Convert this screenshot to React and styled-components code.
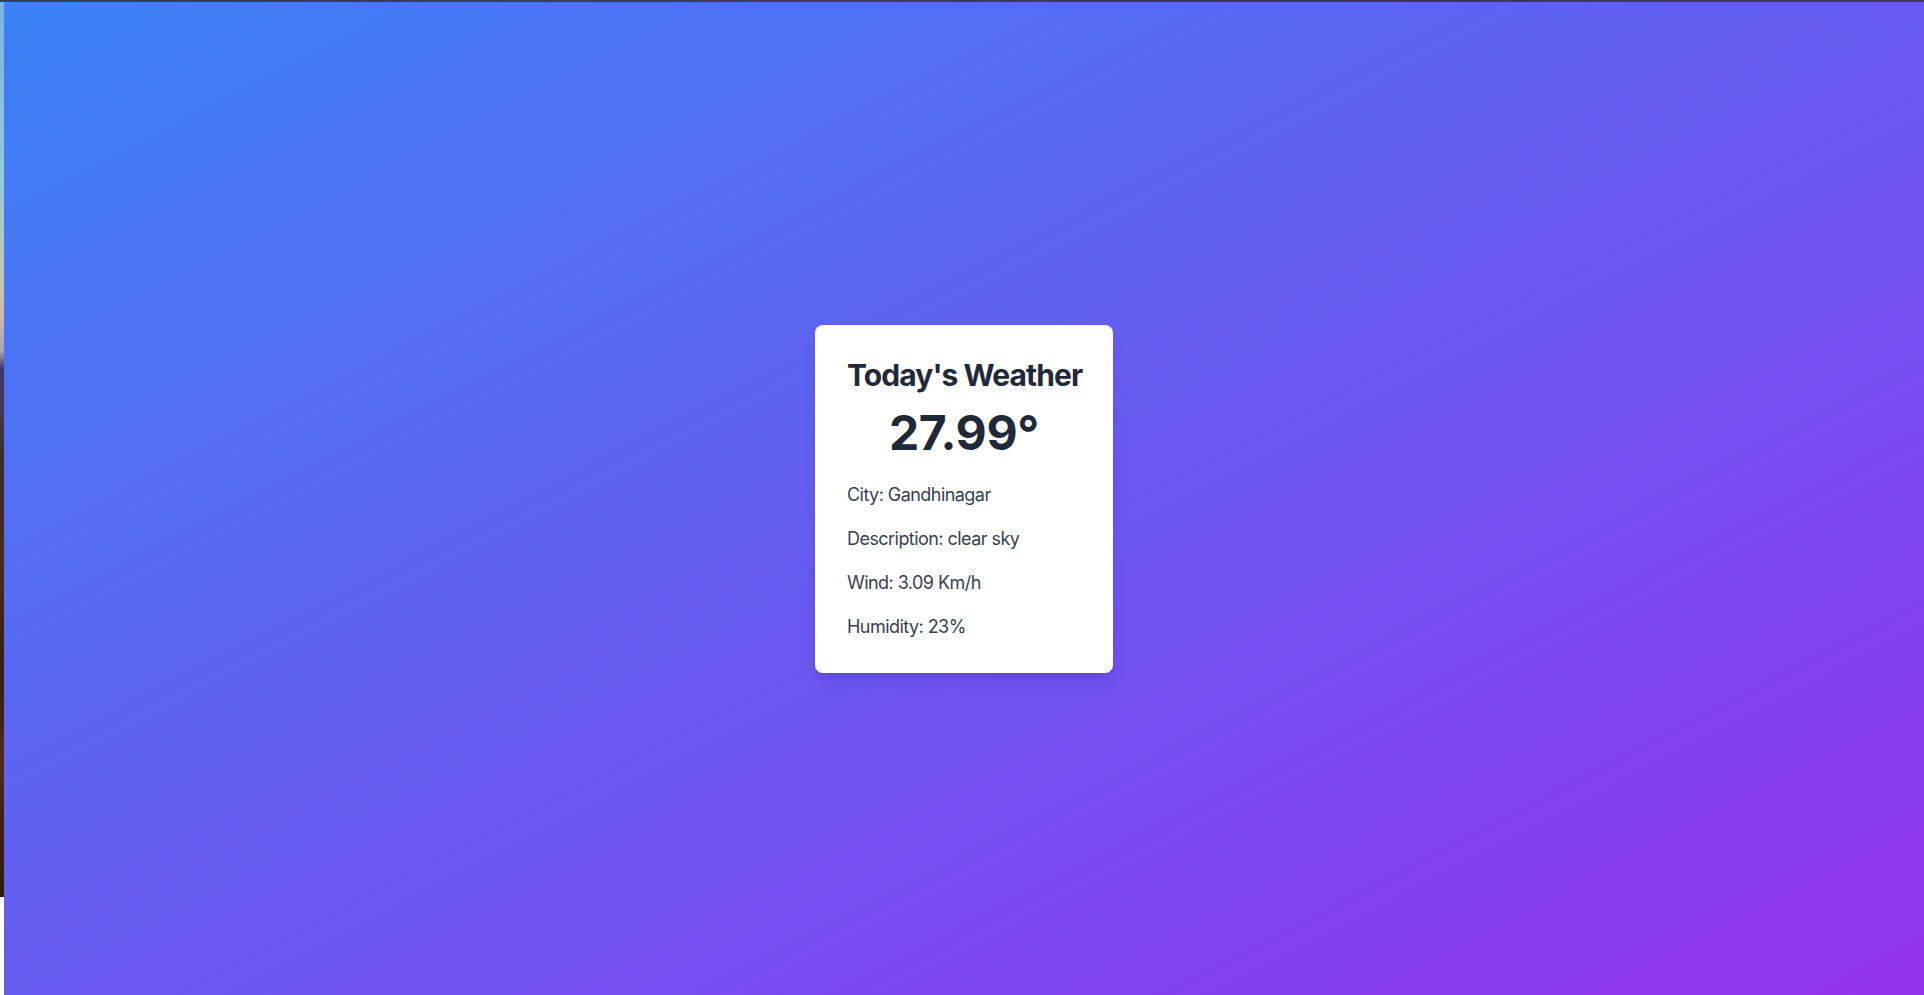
import React from "react";
import styled, { createGlobalStyle } from "styled-components";

const GlobalStyle = createGlobalStyle`
  html, body { margin: 0; padding: 0; height: 100%; }
  body { font-family: Inter, "Noto Sans", sans-serif; background: #ffffff; }
  #root { height: 100%; }
  * { box-sizing: border-box; }
`;

const Screen = styled.div`
  display: flex;
  flex-direction: column;
  width: 100%;
  height: 100vh;
  overflow: hidden;
`;

const TopBar = styled.div`
  height: 2px;
  flex: none;
  background: #3d3d4c;
`;

const Body = styled.div`
  flex: 1;
  display: flex;
  min-height: 0;
`;

const SideStrip = styled.div`
  width: 4px;
  flex: none;
  display: flex;
  flex-direction: column;
  background: #ffffff;
`;

const Wallpaper = styled.div`
  height: 895px;
  background: linear-gradient(
    180deg,
    #78b6e2 0%,
    #93cbd9 20%,
    #c6c4b4 31%,
    #d2b8aa 35%,
    #a9a4b8 39%,
    #3a3868 41%,
    #4a3550 46%,
    #3a2a2e 52%,
    #4b2a1e 62%,
    #3a1d14 75%,
    #50281a 85%,
    #2e1a12 100%
  );
`;

const Main = styled.main`
  flex: 1;
  display: flex;
  align-items: center;
  justify-content: center;
  background: linear-gradient(to bottom right, #3b82f6, #9333ea);
`;

const Card = styled.section`
  background: #ffffff;
  border-radius: 8px;
  padding: 32px;
  width: 298px;
  box-shadow: 0 10px 15px -3px rgba(0, 0, 0, 0.1), 0 4px 6px -4px rgba(0, 0, 0, 0.1);
  display: flex;
  flex-direction: column;
`;

const Title = styled.h1`
  margin: 0 0 16px;
  font-size: 30px;
  line-height: 36px;
  font-weight: 700;
  letter-spacing: -0.9px;
  color: #1f2937;
  text-align: center;
  white-space: nowrap;
`;

const Temp = styled.div`
  margin: 0 0 24px;
  font-size: 48px;
  line-height: 1;
  font-weight: 700;
  letter-spacing: -0.3px;
  color: #1f2937;
  text-align: center;
`;

const Details = styled.div`
  display: flex;
  flex-direction: column;
  gap: 16px;
`;

const Detail = styled.p`
  margin: 0;
  font-size: 18px;
  line-height: 28px;
  letter-spacing: -0.55px;
  color: #374151;
`;

const details = [
  "City: Gandhinagar",
  "Description: clear sky",
  "Wind: 3.09 Km/h",
  "Humidity: 23%",
];

export default function App() {
  return (
    <>
      <GlobalStyle />
      <Screen>
        <TopBar />
        <Body>
          <SideStrip>
            <Wallpaper />
          </SideStrip>
          <Main>
            <Card>
              <Title>Today's Weather</Title>
              <Temp>27.99°</Temp>
              <Details>
                {details.map((d) => (
                  <Detail key={d}>{d}</Detail>
                ))}
              </Details>
            </Card>
          </Main>
        </Body>
      </Screen>
    </>
  );
}
